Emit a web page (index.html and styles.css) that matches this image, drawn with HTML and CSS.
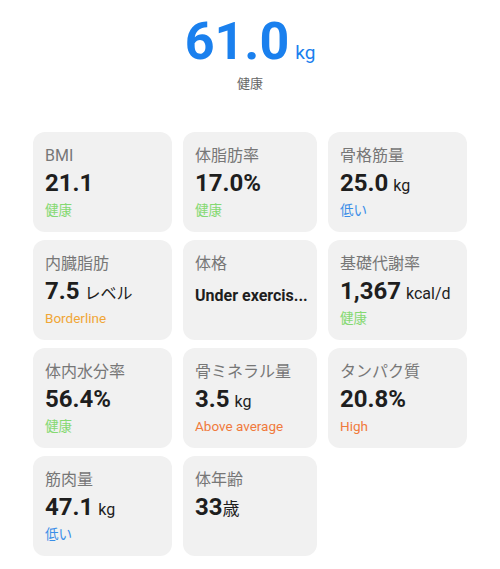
FILE: index.html
```html
<!DOCTYPE html>
<html lang="ja">

<head>
    <meta charset="utf-8">
    <meta name="viewport" content="width=device-width, initial-scale=1.0">
    <title>体組成</title>
    <link rel="stylesheet" href="styles.css">
</head>

<body>
    <header class="summary">
        <div class="weight"><span class="weight-value">61.0</span><span class="weight-unit">kg</span></div>
        <div class="weight-status">健康</div>
    </header>

    <section class="grid">
        <div class="card">
            <div class="label">BMI</div>
            <div class="value">21.1</div>
            <div class="status good">健康</div>
        </div>
        <div class="card">
            <div class="label">体脂肪率</div>
            <div class="value">17.0%</div>
            <div class="status good">健康</div>
        </div>
        <div class="card">
            <div class="label">骨格筋量</div>
            <div class="value">25.0<span class="unit">kg</span></div>
            <div class="status low">低い</div>
        </div>

        <div class="card">
            <div class="label">内臓脂肪</div>
            <div class="value">7.5<span class="unit">レベル</span></div>
            <div class="status warn">Borderline</div>
        </div>
        <div class="card">
            <div class="label">体格</div>
            <div class="value text">Under exercis...</div>
        </div>
        <div class="card">
            <div class="label">基礎代謝率</div>
            <div class="value">1,367<span class="unit">kcal/d</span></div>
            <div class="status good">健康</div>
        </div>

        <div class="card">
            <div class="label">体内水分率</div>
            <div class="value">56.4%</div>
            <div class="status good">健康</div>
        </div>
        <div class="card">
            <div class="label">骨ミネラル量</div>
            <div class="value">3.5<span class="unit">kg</span></div>
            <div class="status high">Above average</div>
        </div>
        <div class="card">
            <div class="label">タンパク質</div>
            <div class="value">20.8%</div>
            <div class="status high">High</div>
        </div>

        <div class="card">
            <div class="label">筋肉量</div>
            <div class="value">47.1<span class="unit">kg</span></div>
            <div class="status low">低い</div>
        </div>
        <div class="card">
            <div class="label">体年齢</div>
            <div class="value">33<span class="unit tight">歳</span></div>
        </div>
    </section>
</body>

</html>
```

FILE: styles.css
```css
* {
    margin: 0;
    padding: 0;
    box-sizing: border-box;
}

body {
    background-color: #ffffff;
    font-family: Roboto, "Noto Sans CJK JP", sans-serif;
    color: #222222;
}

.summary {
    padding-top: 12px;
    text-align: center;
}

.weight {
    height: 60px;
    line-height: 60px;
    color: #1a80ee;
}

.weight-value {
    font-size: 52px;
    font-weight: 700;
}

.weight-unit {
    font-size: 19px;
    line-height: 19px;
    margin-left: 6px;
}

.weight-status {
    height: 20px;
    margin-top: 2px;
    font-size: 13px;
    line-height: 20px;
    color: #666666;
}

.grid {
    display: grid;
    grid-template-columns: 139px 134px 139px;
    grid-auto-rows: 100px;
    column-gap: 11px;
    row-gap: 8px;
    margin: 38px 0 0 33px;
}

.card {
    background-color: #f1f1f1;
    border-radius: 12px;
    padding: 14px 12px 0;
}

.label {
    height: 20px;
    font-size: 16px;
    line-height: 20px;
    color: #777777;
}

.value {
    height: 30px;
    margin-top: 2px;
    font-size: 24px;
    font-weight: 700;
    line-height: 30px;
    color: #1e1e1e;
    white-space: nowrap;
}

.value.text {
    margin-top: 7px;
    font-size: 16px;
}

.unit {
    font-size: 16px;
    font-weight: 400;
    line-height: 1;
    margin-left: 5px;
}

.unit.tight {
    margin-left: 0;
    font-size: 17px;
}

.status {
    height: 18px;
    margin-top: 3px;
    font-size: 13.5px;
    line-height: 18px;
}

.good {
    color: #85d972;
}

.low {
    color: #3a8ee8;
}

.warn {
    color: #f0a636;
}

.high {
    color: #f07a3c;
}
```
